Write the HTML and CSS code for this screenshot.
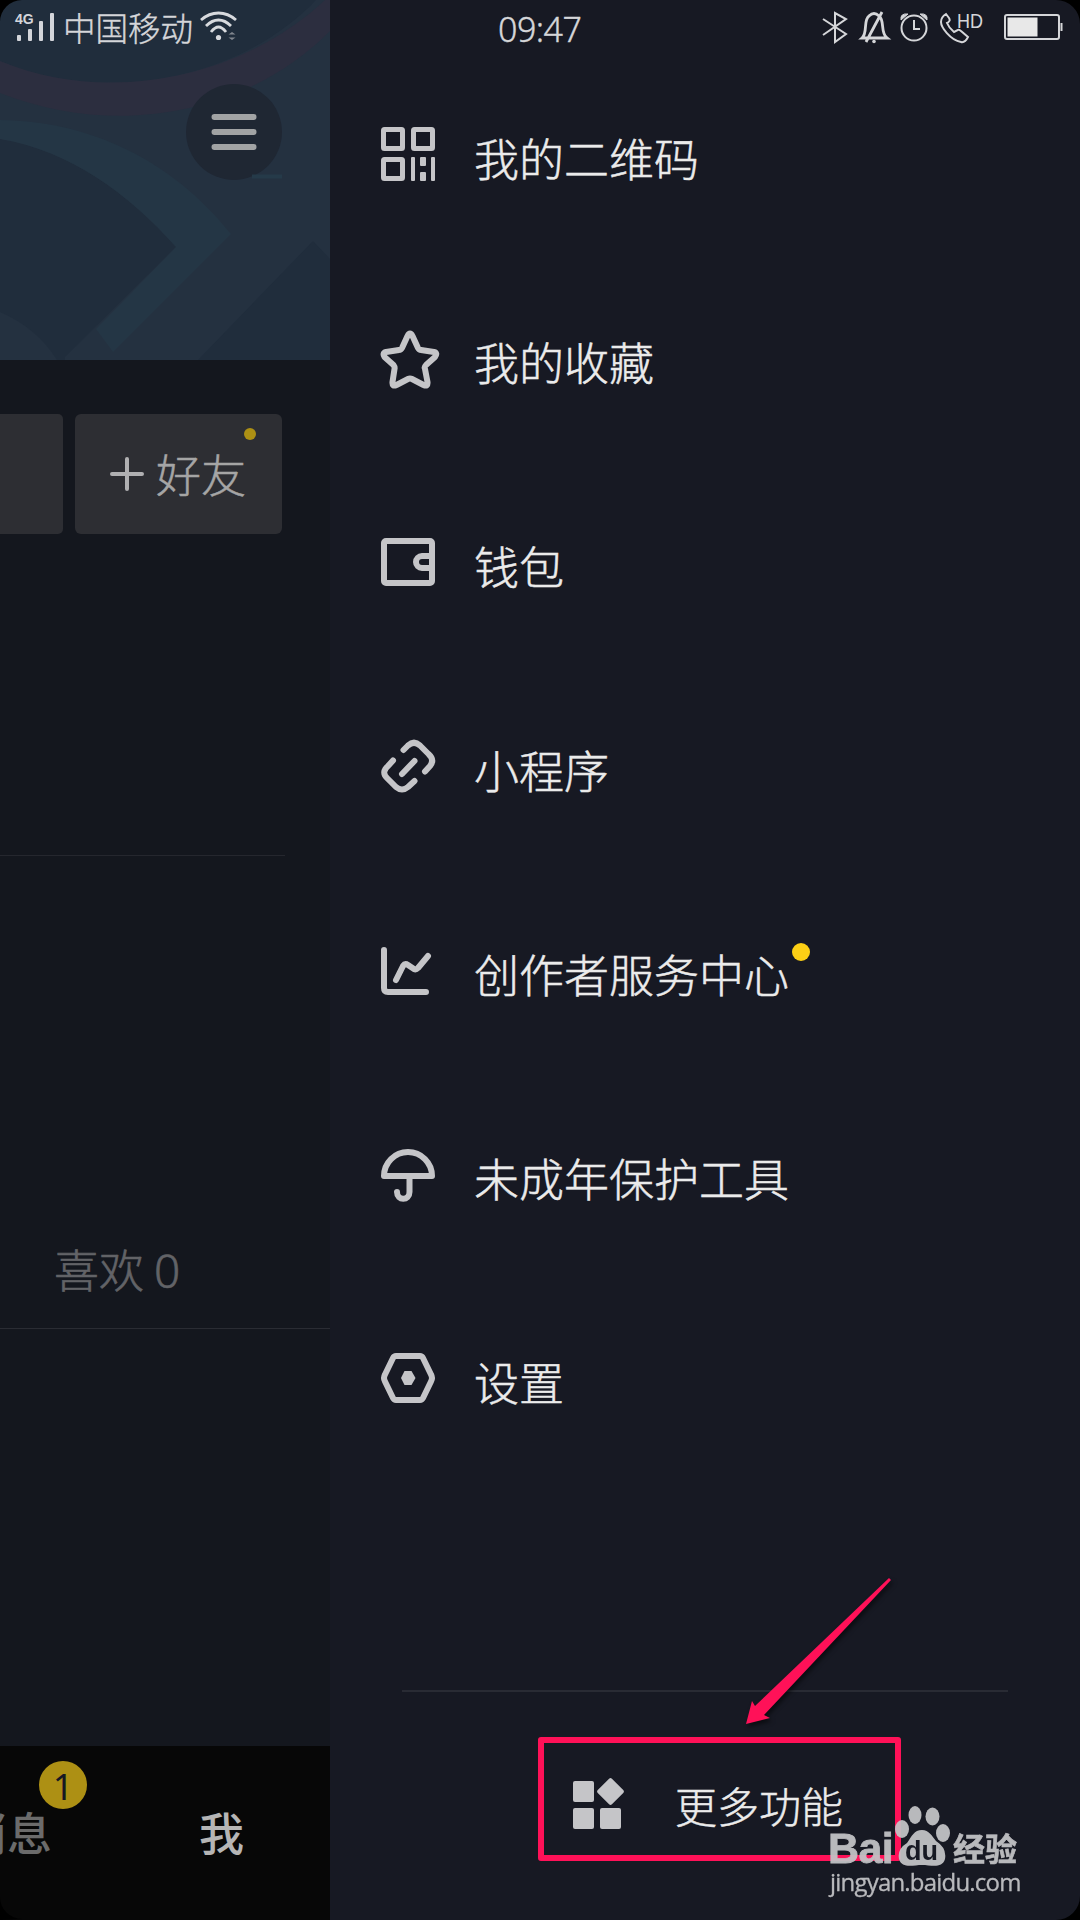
FILE: index.html
```html
<!DOCTYPE html>
<html lang="zh-CN">
<head>
<meta charset="utf-8">
<title>我的</title>
<link rel="stylesheet" href="styles.css">
</head>
<body>
<div class="screen">
  <header class="status">
    <svg class="signal" viewBox="0 0 40 30" width="40" height="30" fill="#d3d5da">
      <rect x="2" y="23" width="4" height="6" rx="1"/><rect x="13" y="17" width="4" height="12" rx="1"/><rect x="24" y="9" width="4" height="20" rx="1"/><rect x="35" y="1" width="4" height="28" rx="1"/>
      <text class="net" x="0" y="12">4G</text>
    </svg>
    <span class="carrier">中国移动</span>
    <svg class="wifi" viewBox="0 0 38 30" width="38" height="30" fill="none" stroke="#d8dade" stroke-width="2.8">
      <path d="M1 9Q9 2 18.5 2T36 9M6 15Q12 9 18.5 9T31 15M11 21Q15 16 18.500 16T26 21"/>
      <circle cx="18.500" cy="26.500" r="2.600" fill="#d8dade" stroke="none"/>
      <path d="M28.500 23.500L32 21l3.500 2.500zM28.500 26.500L32 29l3.500-2.500z" fill="#81878f" stroke="none"/>
    </svg>
    <span class="clock">09:47</span>
    <svg class="indicators" viewBox="0 0 246 34" width="246" height="34" fill="none" stroke="#d5d6d9" stroke-width="2">
      <path d="M2 9L25 24L14 32V3L25 9L2 25"/>
      <path d="M41 28C47 23 42 10 48 6Q53 1 58 6C64 10 59 23 66 28ZM45 32L61 2" stroke-width="2.800"/><circle cx="53" cy="31.500" r="1.800" fill="#d5d6d9" stroke="none"/>
      <circle cx="93" cy="18" r="12.500"/><path d="M93 10V19H99"/><path d="M80 10Q79 3 87 4ZM106 10Q107 3 99 4Z" fill="#d5d6d9" stroke-width="1"/>
      <path d="M125 4L128 8Q130 11 126 13Q128 18 133 22L137 20Q138 19 140 21L147 27Q144 33 140 32C129 30 120 17 120 12Q120 7 125 4Z"/>
      <text class="hd" x="136" y="18" textLength="26" lengthAdjust="spacingAndGlyphs">HD</text>
      <rect x="184" y="5" width="54" height="24" rx="2"/><rect x="186.500" y="7.500" width="30" height="19" fill="#e8e8e8" stroke="none"/><path d="M240.500 13V21"/>
    </svg>
  </header>

  <section class="profile">
    <div class="cover">
      <svg viewBox="0 0 330 360" width="330" height="360">
        <rect width="330" height="360" fill="#243140"/>
        <path d="M0 0H316C240 80 105 105 0 61Z" fill="#202d3c"/>
        <path d="M0 61C105 105 240 80 325 0H330V31C250 112 120 140 0 93Z" fill="#2c2e3f"/>
        <path d="M0 139C70 151 128 193 176 247L65 357V360H57Q37 328 0 312Z" fill="#202d3c"/>
        <path d="M0 120C90 121 172 160 231 234L113 352L96 329L176 247C128 193 70 151 0 139Z" fill="#243645"/>
        <path d="M198 360L313 241L330 259V360Z" fill="#202d3c"/>
        <circle cx="234" cy="132" r="48" fill="#1f2733"/>
        <path d="M252 176.500H282" stroke="#253a49" stroke-width="4"/>
        <path d="M214.500 117H253.500M214.500 132H253.500M214.500 147H253.500" stroke="#a1a3a4" stroke-width="6" stroke-linecap="round"/>
      </svg>
    </div>
    <div class="actions">
      <div class="stub"></div>
      <div class="friend">
        <svg viewBox="0 0 36 36" width="36" height="36" stroke="#b0b0b2" stroke-width="4" stroke-linecap="round"><path d="M3 18H33M18 3V33"/></svg>
        <span>好友</span><i class="dot"></i>
      </div>
    </div>
    <div class="bio"></div>
    <div class="likes">喜欢 <span>0</span></div>
    <div class="works"></div>
    <nav class="tabs"><span class="messages">消息<b class="badge">1</b></span><span class="me">我</span></nav>
  </section>

  <aside class="drawer">
    <ul class="menu">
      <li><svg class="icon" viewBox="0 0 60 60"><g fill="none" stroke="#c5c5c8" stroke-width="5"><rect x="3.500" y="3.500" width="19" height="19" rx="1"/><rect x="33.500" y="3.500" width="19" height="19" rx="1"/><rect x="3.500" y="33.500" width="19" height="19" rx="1"/></g><g fill="#c5c5c8"><rect x="31" y="31" width="4" height="24" rx="1"/><rect x="40" y="31" width="6" height="9" rx="1"/><rect x="40" y="46" width="6" height="9" rx="1"/><rect x="51" y="31" width="4" height="24" rx="1"/></g></svg><span>我的二维码</span></li>
      <li><svg class="icon line" viewBox="0 0 60 60"><path d="M27.500 6Q30 1 32.500 6L38 18Q39 20 41 20L54 22Q58 23 55 27L46 35Q44 37 45 39L47.500 52Q48 57 43.500 55L32 49Q30 48 28 49L16.500 55Q12 57 12.500 52L14.500 39Q15 37 13.500 35L4.500 27Q2 23 6 22L19 20Q21 20 22 18Z"/></svg><span>我的收藏</span></li>
      <li><svg class="icon line" viewBox="0 0 60 60"><rect x="4" y="7" width="48" height="42" rx="2"/><path d="M52 22H42A6 6 0 0 0 42 34H52"/></svg><span>钱包</span></li>
      <li><svg class="icon line" viewBox="0 0 60 60"><path d="M23.500 12L28 7.500Q34 2 40 7.500L48.500 16Q55 22 50 28L45 33.500M13 22.500L8 28Q1 34 7 40L16 49Q22 54 28 49L34.500 43M22 36L34.500 23"/></svg><span>小程序</span></li>
      <li><svg class="icon line" viewBox="0 0 60 60"><path d="M4 8V46Q4 50 8 50H46M16 38L23 24Q25 21 28 23L34 27Q36 28 38 26L48 14"/></svg><span>创作者服务中心<i class="dot"></i></span></li>
      <li><svg class="icon line" viewBox="0 0 60 60"><path d="M4 30A24 24 0 0 1 52 30ZM29.500 30V46C29.500 55 17 55 17 46"/></svg><span>未成年保护工具</span></li>
      <li><svg class="icon line" viewBox="0 0 60 60"><path d="M16 6H40Q42 6 43 8L51 24.500Q53 28 51 31.500L43 48Q42 50 40 50H16Q14 50 13 48L5 31.500Q3 28 5 24.500L13 8Q14 6 16 6Z"/><path d="M24.500 21H31.500L35.500 28L31.500 35H24.500L21 28Z" fill="#c5c5c8" stroke="none"/></svg><span>设置</span></li>
    </ul>
    <div class="more">
      <svg viewBox="0 0 52 52" width="52" height="52" fill="#c5c5c8"><rect y="3" width="21" height="21" rx="2"/><rect y="30" width="21" height="21" rx="2"/><rect x="27" y="30" width="21" height="21" rx="2"/><rect x="27.500" y="3.500" width="20" height="20" rx="2" transform="rotate(45 37.500 13.500)"/></svg>
      <span>更多功能</span>
    </div>
  </aside>

  <div class="highlight"></div>
  <svg class="arrow" viewBox="0 0 160 160" width="160" height="160"><path d="M149 0L151 2L24 137L30 140L6 146L12 123L15 128Z" fill="#ff1158"/></svg>
  <div class="watermark">
    <div class="brand"><span class="bai">Bai</span>
      <svg viewBox="0 0 58 62" width="58" height="62" fill="#c3c3c6"><ellipse cx="8" cy="24" rx="7" ry="9"/><ellipse cx="21" cy="10" rx="6.500" ry="9"/><ellipse cx="38.500" cy="11.500" rx="7" ry="9"/><ellipse cx="49" cy="28" rx="7" ry="9"/><path d="M28 25C35 25 38 31 42 36Q53 43 51 54C48 64 37 60 28 60S8 64 5 54Q3 44 13 38C18 31 20 25 28 25Z"/><text class="du" x="11" y="55">du</text></svg>
      <span class="jy">经验</span></div>
    <div class="site">jingyan.baidu.com</div>
  </div>
  <svg class="corners" viewBox="0 0 1080 1920" width="1080" height="1920"><path d="M0 0H22A22 22 0 0 0 0 22ZM1080 0H1056A24 24 0 0 1 1080 24ZM0 1920V1897A22 22 0 0 0 22 1919ZM1080 1920H1056A24 24 0 0 0 1080 1896Z"/></svg>
</div>
</body>
</html>
```
FILE: styles.css
```css
* { box-sizing: border-box; }
body { margin: 0; background: #171923; font-family: "Noto Sans CJK SC", sans-serif; font-weight: 300; }
.screen { position: relative; display: grid; grid-template-columns: 330px 750px; width: 1080px; height: 1920px; overflow: hidden; background: #171923; }

/* system status bar floats above both panes */
.status { position: absolute; z-index: 2; top: 0; left: 0; width: 1080px; height: 56px; display: flex; align-items: flex-start; color: #d5d6d9; }
.signal { margin: 12px 0 0 15px; overflow: visible; }
.net { font: 700 14px "Liberation Sans", sans-serif; }
.carrier { margin: 2px 0 0 8px; width: 131px; font-size: 32.500px; line-height: 50px; -webkit-text-stroke: .4px; }
.wifi { margin: 11px 0 0 6px; }
.clock { margin: 4px 0 0 260px; width: 92px; font: 300 34px/50px "Noto Sans", sans-serif; letter-spacing: -.5px; -webkit-text-stroke: .4px; }
.indicators { margin: 10px 0 0 231px; }
.hd { font: 20px "Liberation Sans", sans-serif; fill: #d5d6d9; stroke: none; }

.profile { display: flex; flex-direction: column; overflow: hidden; background: #14171e; }
.cover, .cover svg { display: block; height: 360px; }
.actions { display: flex; gap: 12px; margin-top: 54px; height: 120px; }
.stub { width: 63px; border-radius: 0 5px 5px 0; background: #2d2e33; }
.friend { position: relative; display: flex; align-items: center; width: 207px; padding-left: 34px; gap: 11px; border-radius: 6px; background: #2d2e33; color: #a5a5a5; font-size: 45px; -webkit-text-stroke: .5px; }
.friend span { line-height: 60px; }
.dot { position: absolute; border-radius: 50%; background: #fccf15; width: 18px; height: 18px; }
.friend .dot { top: 14px; left: 169px; width: 12px; height: 12px; background: #ad9014; }
.bio { width: 285px; height: 322px; border-bottom: 1px solid #25272e; }
.likes { height: 473px; padding: 380px 0 0 54px; border-bottom: 1px solid #2a2c33; color: #626367; font-size: 45px; line-height: 66px; -webkit-text-stroke: .6px; }
.likes span { font-family: "Noto Sans", sans-serif; font-size: 46px; line-height: 1; }
.works { flex: 1; }
.tabs { display: flex; height: 174px; background: #070707; font-size: 45px; font-weight: 500; line-height: 66px; }
.messages { position: relative; margin: 53px 0 0 -38px; width: 237px; color: #6b6b6b; }
.badge { position: absolute; left: 77px; top: -38px; width: 48px; height: 48px; border-radius: 50%; background: #ad9014; color: #161823; font: 400 36px/51px "Noto Sans", sans-serif; text-align: center; }
.me { margin-top: 53px; color: #b5b5b5; }

.drawer { display: flex; flex-direction: column; background: #171923; color: #ebebeb; }
.menu { list-style: none; margin: 0; padding: 125px 0 0 50px; height: 1690px; }
.menu li { display: flex; gap: 34px; height: 204px; font-size: 45px; line-height: 65px; -webkit-text-stroke: .5px; }
.menu span { position: relative; height: 66px; white-space: nowrap; }
.menu span .dot { top: 2px; left: 318px; }
.icon { width: 60px; height: 60px; flex: none; margin-top: 1px; }
.line { fill: none; stroke: #c5c5c8; stroke-width: 6; stroke-linecap: round; stroke-linejoin: round; }
.more { display: flex; margin: 0 72px 0 72px; padding: 86px 0 0 171px; height: 230px; border-top: 2px solid #292b34; font-size: 42px; line-height: 60px; -webkit-text-stroke: .5px; }
.more span { margin: -3px 0 0 50px; }

/* tutorial annotations drawn over the page */
.highlight { position: absolute; left: 538px; top: 1737px; width: 363px; height: 124px; border: 6px solid #ff1158; border-radius: 3px; }
.arrow { position: absolute; left: 740px; top: 1578px; filter: drop-shadow(2px 3px 2px #0008); }
.watermark { position: absolute; left: 828px; top: 1805px; width: 195px; color: #c3c3c6; opacity: .94; }
.brand { display: flex; height: 62px; }
.bai { width: 66px; margin-top: 21px; font: 700 43px/44px "Liberation Sans", sans-serif; letter-spacing: -.6px; -webkit-text-stroke: .8px; }
.du { font: 700 27px "Liberation Sans", sans-serif; fill: #171923; }
.jy { font-size: 32px; font-weight: 700; line-height: 44px; margin-top: 20px; margin-left: 1px; -webkit-text-stroke: .6px; }
.site { margin-top: -2px; padding-left: 2px; font: 24px/34px "Open Sans", sans-serif; letter-spacing: -.8px; -webkit-text-stroke: .3px; }
.corners { position: absolute; z-index: 3; left: 0; top: 0; }
```
